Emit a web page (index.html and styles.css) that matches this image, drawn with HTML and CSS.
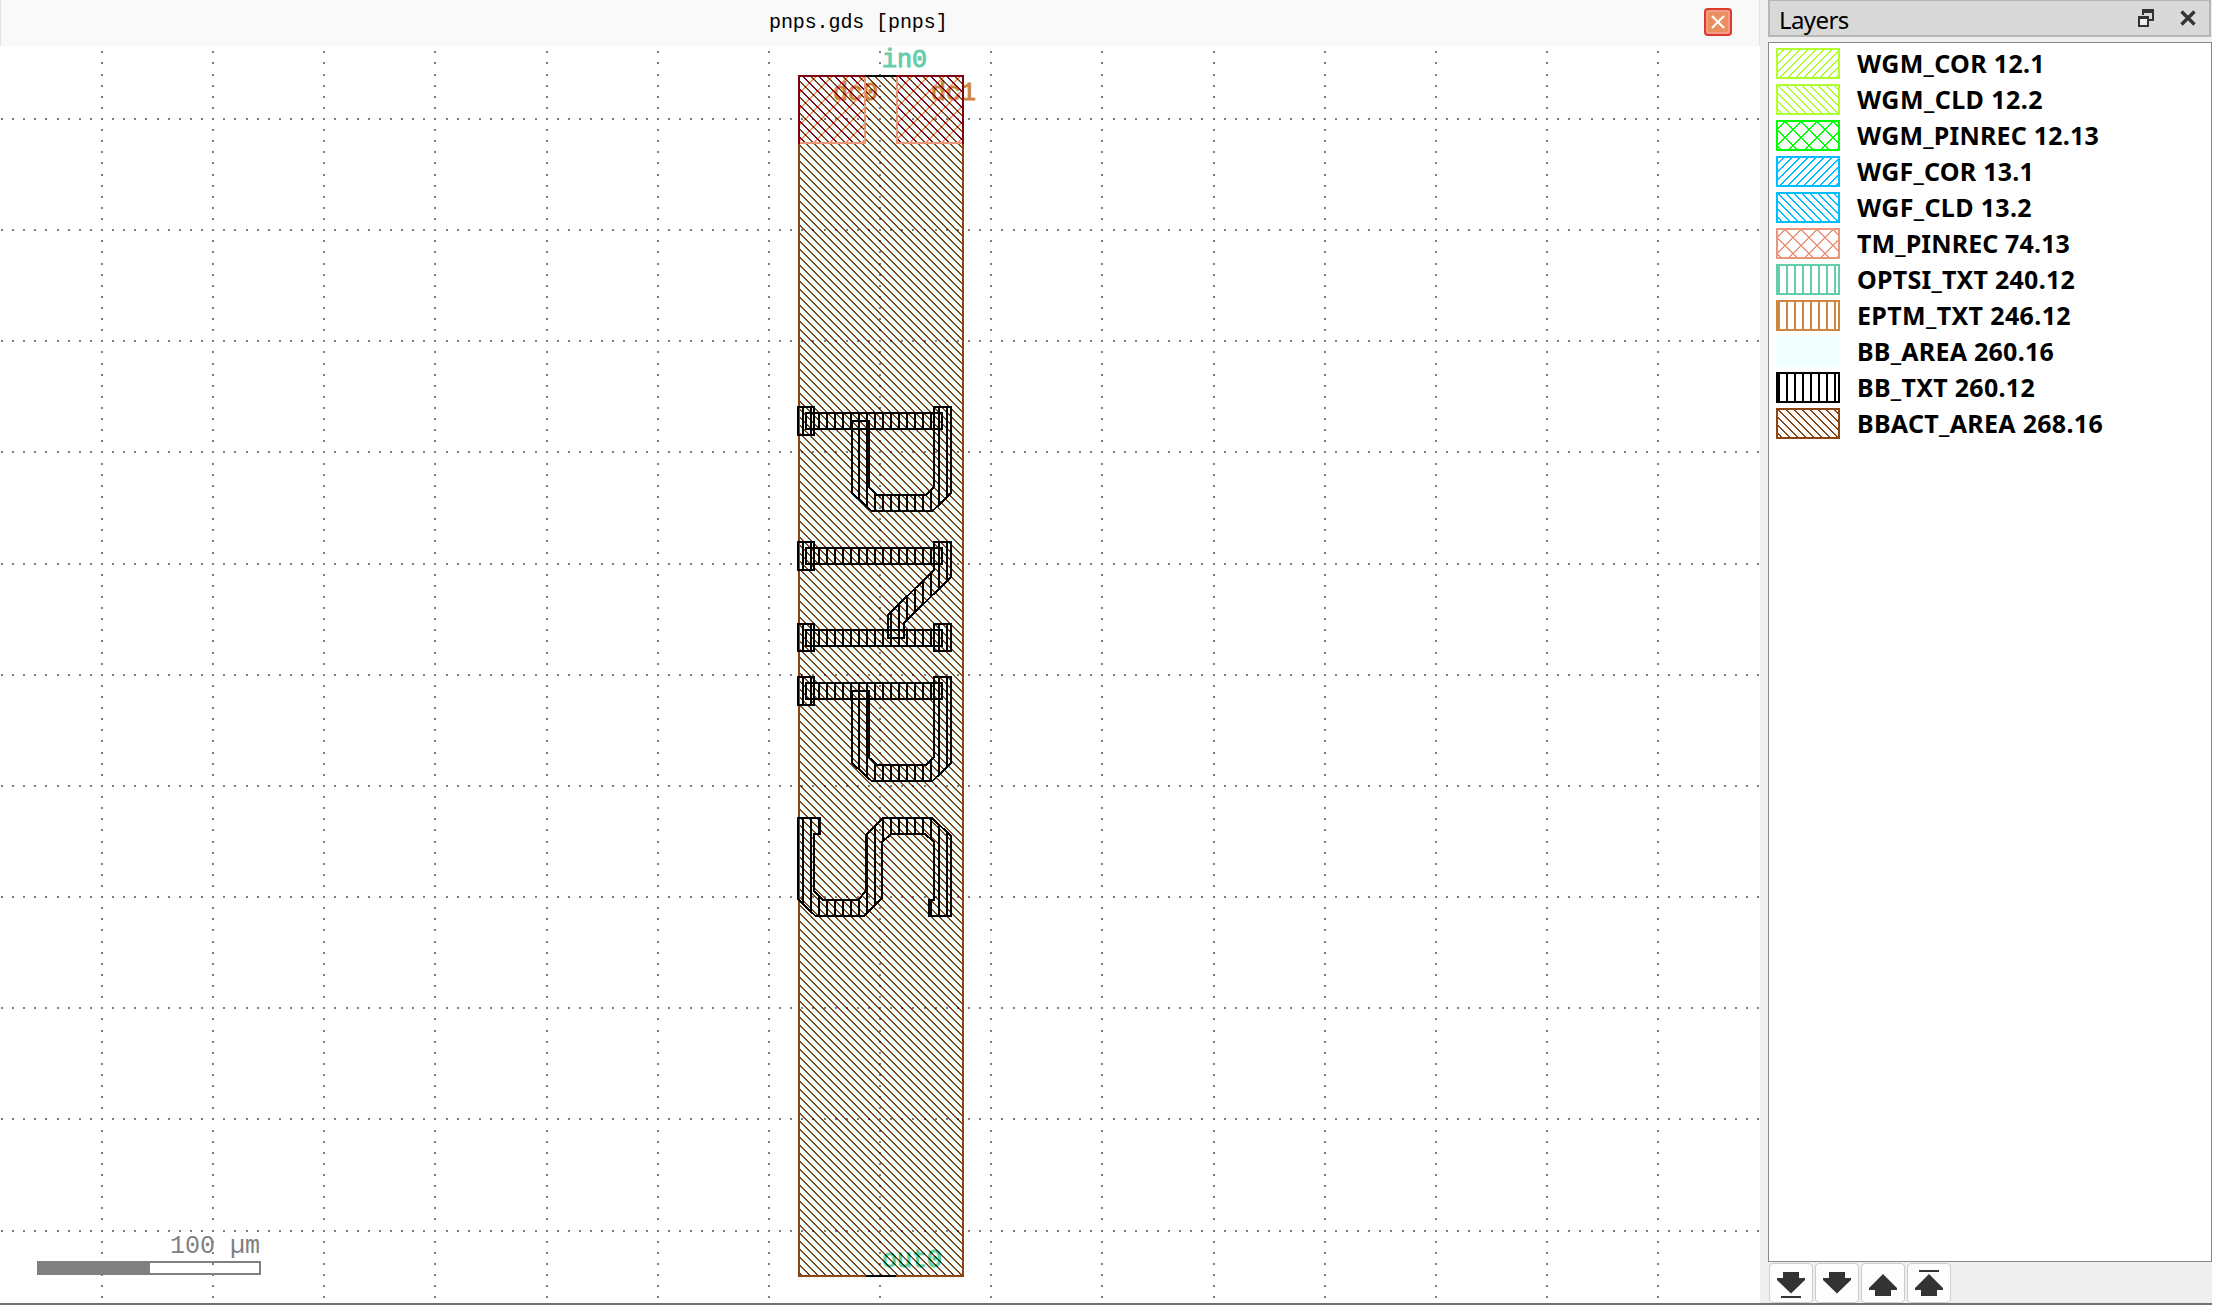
FILE: index.html
```html
<!DOCTYPE html>
<html lang="en">
<head>
<meta charset="utf-8">
<title>pnps.gds [pnps]</title>
<link rel="stylesheet" href="styles.css">
</head>
<body>
<div class="app">
  <main class="view">
    <header class="tab">
      <span class="tab-title">pnps.gds [pnps]</span>
      <button class="tab-close" aria-label="Close"><svg width="14" height="14" viewBox="0 0 14 14"><path d="M1 1l12 12M13 1L1 13" stroke="#fff" stroke-width="2.2"/></svg></button>
    </header>
    <svg class="canvas" width="1760" height="1257" viewBox="0 46 1760 1257">
      <defs>
        <pattern id="brown" patternUnits="userSpaceOnUse" x="6" y="0" width="8" height="8"><path class="hatch" stroke="#8b4513" d="M0 .5h2m-1 1h2m-1 1h2m-1 1h2m-1 1h2m-1 1h2m-1 1h2m-1 1h1M0 7.5h1"/></pattern>
        <pattern id="dark" patternUnits="userSpaceOnUse" x="6" y="0" width="8" height="8"><path class="hatch" stroke="#890412" d="M0 .5h2m-1 1h2m-1 1h2m-1 1h2m-1 1h2m-1 1h2m-1 1h2m-1 1h1M0 7.5h1"/></pattern>
        <pattern id="gridDark" patternUnits="userSpaceOnUse" x="6" y="0" width="8" height="8"><path class="hatch" stroke="#800000" d="M0 .5h2m-1 1h2m-1 1h2m-1 1h2m-1 1h2m-1 1h2m-1 1h2m-1 1h1M0 7.5h1"/></pattern>
        <pattern id="pinBack" patternUnits="userSpaceOnUse" x="6" y="0" width="16" height="16"><path class="hatch" stroke="#890412" d="M0 .5h2m-1 1h2m-1 1h2m-1 1h2m-1 1h2m-1 1h2m-1 1h2m-1 1h2m-1 1h2m-1 1h2m-1 1h2m-1 1h2m-1 1h2m-1 1h2m-1 1h2m-1 1h1M0 15.5h1"/></pattern>
        <pattern id="pinFwd" patternUnits="userSpaceOnUse" x="13" y="0" width="16" height="16"><path class="hatch" stroke="#e9967a" d="M14 .5h2m-3 1h2m-3 1h2m-3 1h2m-3 1h2m-3 1h2m-3 1h2m-3 1h2m-3 1h2m-3 1h2m-3 1h2m-3 1h2m-3 1h2m-3 1h2m-3 1h2M0 15.5h1M15 15.5h1"/></pattern>
        <pattern id="pinMaskFill" patternUnits="userSpaceOnUse" x="13" y="0" width="16" height="16"><path class="hatch" stroke="#fff" d="M14 .5h2m-3 1h2m-3 1h2m-3 1h2m-3 1h2m-3 1h2m-3 1h2m-3 1h2m-3 1h2m-3 1h2m-3 1h2m-3 1h2m-3 1h2m-3 1h2m-3 1h2M0 15.5h1M15 15.5h1"/></pattern>
        <mask id="pinMask" maskUnits="userSpaceOnUse" x="790" y="70" width="180" height="80"><path fill="url(#pinMaskFill)" d="M799 76h66v67h-66zM897 76h66v67h-66z"/></mask>
        <pattern id="optText" patternUnits="userSpaceOnUse" x="6" y="0" width="8" height="8"><rect width="8" height="8" fill="#66cdaa"/><path class="hatch" stroke="#024502" d="M0 .5h2m-1 1h2m-1 1h2m-1 1h2m-1 1h2m-1 1h2m-1 1h2m-1 1h1M0 7.5h1"/></pattern>
        <pattern id="epText" patternUnits="userSpaceOnUse" x="6" y="0" width="8" height="8"><rect width="8" height="8" fill="#c6853b"/><path class="hatch" stroke="#890512" d="M0 .5h2m-1 1h2m-1 1h2m-1 1h2m-1 1h2m-1 1h2m-1 1h2m-1 1h1M0 7.5h1"/></pattern>
        <pattern id="vert" patternUnits="userSpaceOnUse" x="2" y="0" width="8" height="8"><rect width="2" height="8" fill="#000"/></pattern>
      </defs>

      <rect x="798" y="75" width="166" height="1202" fill="#f0ffff"/>
      <path class="grid-dots" fill="#808080"/>
      <rect x="799" y="76" width="164" height="1200" fill="url(#brown)"/>
      <svg x="800" y="77" width="162" height="1198" viewBox="800 77 162 1198"><path class="grid-dots" fill="url(#gridDark)"/></svg>
      <rect class="line" x="799" y="76" width="164" height="1200" stroke="#8b4513"/>

      <text class="label dc" x="833" y="99.500" fill="url(#epText)" stroke="url(#epText)">dc0</text>
      <text class="label dc" x="931" y="99.500" fill="url(#epText)" stroke="url(#epText)">dc<tspan fill="#cd853f" stroke="#cd853f">1</tspan></text>
      <g class="pins">
        <path fill="url(#pinFwd)" d="M799 76h66v67h-66zM897 76h66v67h-66z"/>
        <path fill="url(#pinBack)" d="M799 76h66v67h-66zM897 76h66v67h-66z"/>
        <rect x="799" y="76" width="164" height="67" fill="url(#dark)" mask="url(#pinMask)"/>
        <path class="line" stroke="#e9967a" d="M865 76v67h-66M897 76v67h66"/>
        <path class="line" stroke="#800010" d="M866 76h-67v68M896 76h67v68"/>
        <path class="line" stroke="#000" d="M866 76h30M866 1276h30"/>
      </g>

      <g class="glyphs">
        <g id="p">
          <path d="M798 407h16v28h-16z"/><path d="M806 413h136v16H806z"/>
          <path d="M934 407h17v86l-18 17.500h-62L852 493v-72h16.500v66l8.500 8h49l8-8z"/>
        </g>
        <g>
          <path d="M798 542h16v28h-16z"/><path d="M806 548h136v16H806z"/>
          <path d="M934 542h17v35l-47 46v15h-16v-23l46-45z"/>
          <path d="M798 624h16v27h-16z"/><path d="M806 630h136v16H806z"/><path d="M934 624h17v27h-17z"/>
        </g>
        <use href="#p" y="270"/>
        <path d="M798 818h22v16h-6v57l9 9h35l8-9v-56l17-17h49l19 18v80h-22v-16h5v-58l-9-8h-34l-9 8v56l-18 18h-48.500L798 899z"/>
      </g>

      <text class="label" x="882" y="67" fill="#66cdaa" stroke="#66cdaa">in0</text>
      <text class="label" x="882" y="1266.500" fill="url(#optText)" stroke="url(#optText)">out0</text>

      <rect x="37" y="1261" width="113" height="14" fill="#808080"/>
      <rect class="line" x="38" y="1262" width="222" height="12" stroke="#808080"/>
      <text class="scale" x="170" y="1253">100 µm</text>
    </svg>
  </main>

  <aside class="panel">
    <header class="dock">
      <span class="dock-title">Layers</span>
      <svg width="16" height="18" viewBox="0 0 16 18"><path d="M5 6V1.500h10V11h-4" fill="none" stroke="#333" stroke-width="2"/><path d="M4 0h12v4H4z" fill="#333"/><path d="M1 8.500h9V17H1z" fill="#eee" stroke="#333" stroke-width="2"/><path d="M0 7h11v3H0z" fill="#333"/></svg>
      <svg class="dock-close" width="16" height="16" viewBox="0 0 16 16"><path d="M1.500 1.500l13 13M14.500 1.500l-13 13" stroke="#333639" stroke-width="3.400"/></svg>
    </header>
    <ul class="layers"></ul>
    <footer class="tools">
      <button><svg width="42" height="40"><path d="M13 9h16v6h6v2L21 30.500 7 17v-2h6zM11 33h20v2H11z"/></svg></button>
      <button><svg width="42" height="40"><path d="M13 9h16v6h6v2L21 30.500 7 17v-2h6z"/></svg></button>
      <button><svg width="42" height="40"><path d="M21 11l14 14v2h-6v6H13v-6H7v-2z"/></svg></button>
      <button><svg width="42" height="40"><path d="M21 11l14 14v2h-6v6H13v-6H7v-2zM11 7h20v2H11z"/></svg></button>
    </footer>
  </aside>
  <div class="bottom-edge"></div>
</div>
<script src="script.js"></script>
</body>
</html>
```
FILE: styles.css
```css
* { box-sizing: border-box; }
body { margin: 0; background: #fff; overflow: hidden; }
.app {
  display: grid;
  grid-template: 1303px 2px / 1760px 452px;
  width: 2214px;
  height: 1305px;
}
.view { display: flex; flex-direction: column; }
.tab {
  height: 46px;
  display: grid;
  grid-template-columns: 1fr auto;
  align-items: center;
  padding-right: 27px;
  background: #f9f9f9;
  border: solid #e5e5e5;
  border-width: 0 1px;
}
.tab-title {
  padding-left: 768px;
  font: 20px/46px "Liberation Mono", monospace;
  letter-spacing: -0.1px;
  color: #000;
}
.tab-close {
  width: 28px;
  height: 28px;
  margin: 0 0 2px;
  padding: 0;
  display: grid;
  place-items: center;
  background: #ec8f60;
  border: 2px solid #dc3a2a;
  border-radius: 4px;
  box-shadow: inset 0 0 0 2px #f19d8a;
}
.canvas { display: block; shape-rendering: crispEdges; }
.hatch { fill: none; stroke-width: 1; }
.line { fill: none; stroke-width: 2; }
.glyphs path { fill: url(#vert); stroke: #000; stroke-width: 2; }
.label { font: 25px "Liberation Mono", monospace; stroke-width: 1; }
.scale { font: 25px "Liberation Mono", monospace; fill: #808080; }

.panel {
  display: flex;
  flex-direction: column;
  padding-left: 8px;
  background: #efefef;
}
.dock {
  height: 37px;
  width: 443px;
  display: flex;
  align-items: center;
  padding: 0 13px 0 9px;
  background: #d9d9d9;
  border: 2px solid #b6b6b6;
  border-top-width: 1px;
}
.dock-title {
  flex: 1;
  font: 24px/34px "Noto Sans", sans-serif;
  letter-spacing: -0.6px;
  padding-top: 3px;
}
.dock-close { margin-left: 26px; }
.layers {
  list-style: none;
  margin: 5px 0 0;
  padding: 2px 7px;
  height: 1220px;
  background: #fff;
  border: 1px solid #828790;
}
.layers li {
  height: 36px;
  display: flex;
  align-items: center;
  gap: 17px;
  font: bold 25px/36px "Noto Sans", sans-serif;
  white-space: pre;
}
.layers svg { display: block; shape-rendering: crispEdges; flex: none; }
.layers span { transform-origin: 0 50%; }
.tools { display: flex; gap: 2px; padding: 1px 0 0 1px; }
.tools button {
  width: 44px;
  height: 40px;
  padding: 0;
  background: #fdfdfd;
  border: 1px solid #cdcdcd;
  border-radius: 4px;
}
.tools svg { display: block; fill: #333; margin-top: -1px; }
.bottom-edge { grid-column: 1 / 3; background: #717171; }
```
FILE: script.js
```js
// Dotted grid: 2px dots every 1/10 of a grid cell.
const step = 11.116;
let dots = '';
const dot = (x, y) => { dots += `M${Math.round(x) - 1} ${Math.round(y) - 1}h2v2h-2z`; };
for (let i = 0; i < 15; i++) {
  for (let j = -6; j <= 106; j++) dot(102 + i * step * 10, 119 + j * step);
}
for (let j = 0; j < 11; j++) {
  for (let i = -9; i <= 149; i++) if (i % 10) dot(102 + i * step, 119 + j * step * 10);
}
document.querySelectorAll('.grid-dots').forEach(p => p.setAttribute('d', dots));

// Layer list: name, colour, fill style, text width.
const layers = [
  ['WGM_COR 12.1', '#adff2f', 'fwd', 188],
  ['WGM_CLD 12.2', '#adff2f', 'back', 186],
  ['WGM_PINREC 12.13', '#00ff00', 'cross', 242],
  ['WGF_COR 13.1', '#00bfff', 'fwd', 177],
  ['WGF_CLD 13.2', '#00bfff', 'back', 175],
  ['TM_PINREC 74.13', '#e9967a', 'cross', 213],
  ['OPTSI_TXT 240.12', '#66cdaa', 'vert', 218],
  ['EPTM_TXT 246.12', '#cd853f', 'vert', 214],
  ['BB_AREA 260.16', '#f0ffff', 'solid', 197],
  ['BB_TXT 260.12', '#000000', 'vert', 178],
  ['BBACT_AREA 268.16', '#8b4513', 'back', 246]
];
const list = document.querySelector('.layers');
layers.forEach(([name, color, style, width]) => {
  let d = '';
  for (let y = 0; y < 31; y++) {
    for (let x = 0; x < 64; x++) {
      const back = (x - y + 64) % 8 < 2;
      const fwd = (x + y) % 8 < 2;
      const cross = (x - y + 73) % 16 < 2 || (x + y + 7) % 16 < 2;
      const on = style === 'solid' || x < 2 || x > 61 || y < 2 || y > 28 ||
        (style === 'back' && back) || (style === 'fwd' && fwd) ||
        (style === 'cross' && cross) || (style === 'vert' && (x + 6) % 8 < 2 && x > 3) ||
        (style === 'vert' && x < 4);
      if (on) d += `M${x} ${y}h1v1h-1z`;
    }
  }
  const li = document.createElement('li');
  li.innerHTML = `<svg width="64" height="31"><path fill="${color}" d="${d}"/></svg><span>${name}</span>`;
  list.append(li);
  const span = li.querySelector('span');
  span.style.letterSpacing = (width - span.getBoundingClientRect().width) / name.length + 'px';
});
```
